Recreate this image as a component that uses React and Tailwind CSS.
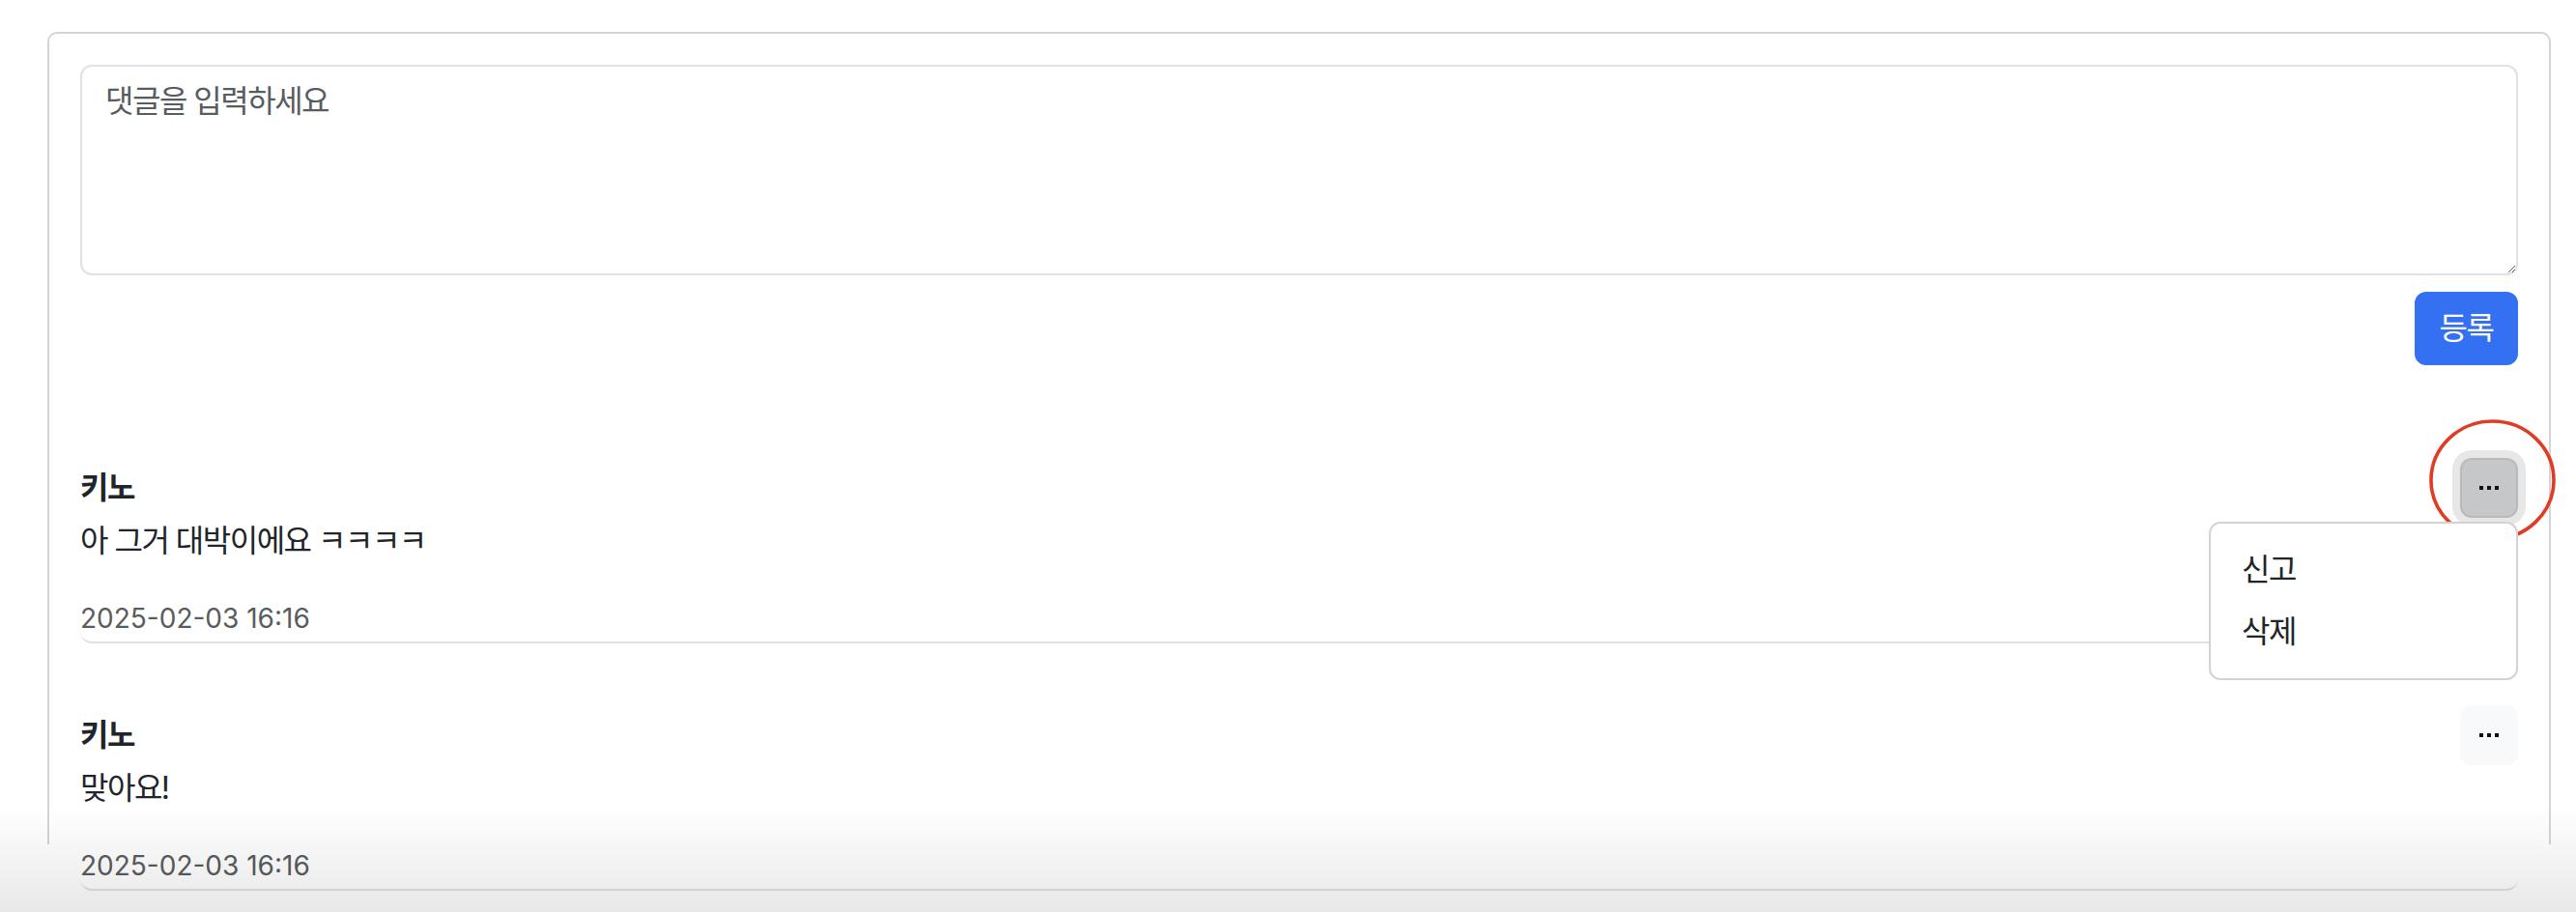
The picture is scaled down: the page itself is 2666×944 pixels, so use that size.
import React from 'react';

const comments = [
  { id: 1, author: '키노', body: '아 그거 대박이에요 ㅋㅋㅋㅋ', date: '2025-02-03 16:16', open: true },
  { id: 2, author: '키노', body: '맞아요!', date: '2025-02-03 16:16', open: false },
];

const Dots = () => (
  <span className="flex items-center gap-[4px]">
    <span className="h-[4px] w-[4px] bg-[#111]" />
    <span className="h-[4px] w-[4px] bg-[#111]" />
    <span className="h-[4px] w-[4px] bg-[#111]" />
  </span>
);

const CommentItem = ({ comment, first }) => (
  <div className={`${first ? 'mt-[96px]' : 'mt-[64px]'} rounded-[12px] border-b-2 border-[#dee2e6] pb-[3px]`}>
    <div className="flex h-[62px] items-center justify-between">
      <strong className="text-[32px] font-bold leading-[48px] tracking-[-1.5px] text-[#212529]">{comment.author}</strong>
      <div className="relative">
        {comment.open ? (
          <button
            type="button"
            className="flex h-[62px] w-[60px] items-center justify-center rounded-[12px] border-2 border-[#b9babb] bg-[#c6c7c8] ring-8 ring-[#e7e7e7]"
          >
            <Dots />
          </button>
        ) : (
          <button
            type="button"
            className="flex h-[62px] w-[60px] items-center justify-center rounded-[12px] border-2 border-[#f8f9fa] bg-[#f8f9fa]"
          >
            <Dots />
          </button>
        )}

        {comment.open && (
          <>
            <svg className="pointer-events-none absolute left-[-32px] top-[-40px] h-[126px] w-[131px]" viewBox="0 0 131 126">
              <ellipse cx="65.5" cy="63" rx="63.5" ry="61" fill="none" stroke="#e23b25" strokeWidth="3.6" />
            </svg>
            <div className="absolute right-0 top-[66px] z-10 w-[320px] rounded-[12px] border-2 border-[#d3d3d3] bg-white py-[16px]">
              <div className="px-[32px] py-[8px] text-[32px] leading-[48px] tracking-[-1.5px] text-[#212529]">신고</div>
              <div className="px-[32px] py-[8px] text-[32px] leading-[48px] tracking-[-1.5px] text-[#212529]">삭제</div>
            </div>
          </>
        )}
      </div>
    </div>
    <p className="mb-[32px] text-[32px] leading-[48px] tracking-[-1.5px] text-[#212529]">{comment.body}</p>
    <div className="pt-[3px] text-[28px] leading-[42px] text-[#595c5f]">{comment.date}</div>
  </div>
);

export default function App() {
  return (
    <div className="relative h-[944px] overflow-hidden bg-white font-['Inter','Noto_Sans_CJK_KR',sans-serif]">
      <div className="ml-[49px] mt-[33px] w-[2591px] rounded-t-[10px] border-2 border-b-0 border-[#d4d4d4] px-[32px] pt-[32px]">
        <textarea
          className="block h-[218px] w-full rounded-[12px] border-2 border-[#dee2e6] px-[24px] py-[12px] text-[32px] leading-[48px] tracking-[-1.5px] text-[#212529] outline-none placeholder:text-[#595c5f]"
          placeholder="댓글을 입력하세요"
        />
        <div className="mt-[17px] flex justify-end">
          <button type="button" className="h-[76px] w-[107px] rounded-[12px] bg-[#3370f2] text-[32px] leading-[48px] tracking-[-1.5px] text-white">
            등록
          </button>
        </div>

        <div className="h-[400px]">
          {comments.map((c, i) => (
            <CommentItem key={c.id} comment={c} first={i === 0} />
          ))}
        </div>
      </div>

      <div className="pointer-events-none absolute bottom-0 left-0 h-[110px] w-full bg-linear-to-b from-transparent to-[rgba(0,0,0,0.09)]" />
    </div>
  );
}
